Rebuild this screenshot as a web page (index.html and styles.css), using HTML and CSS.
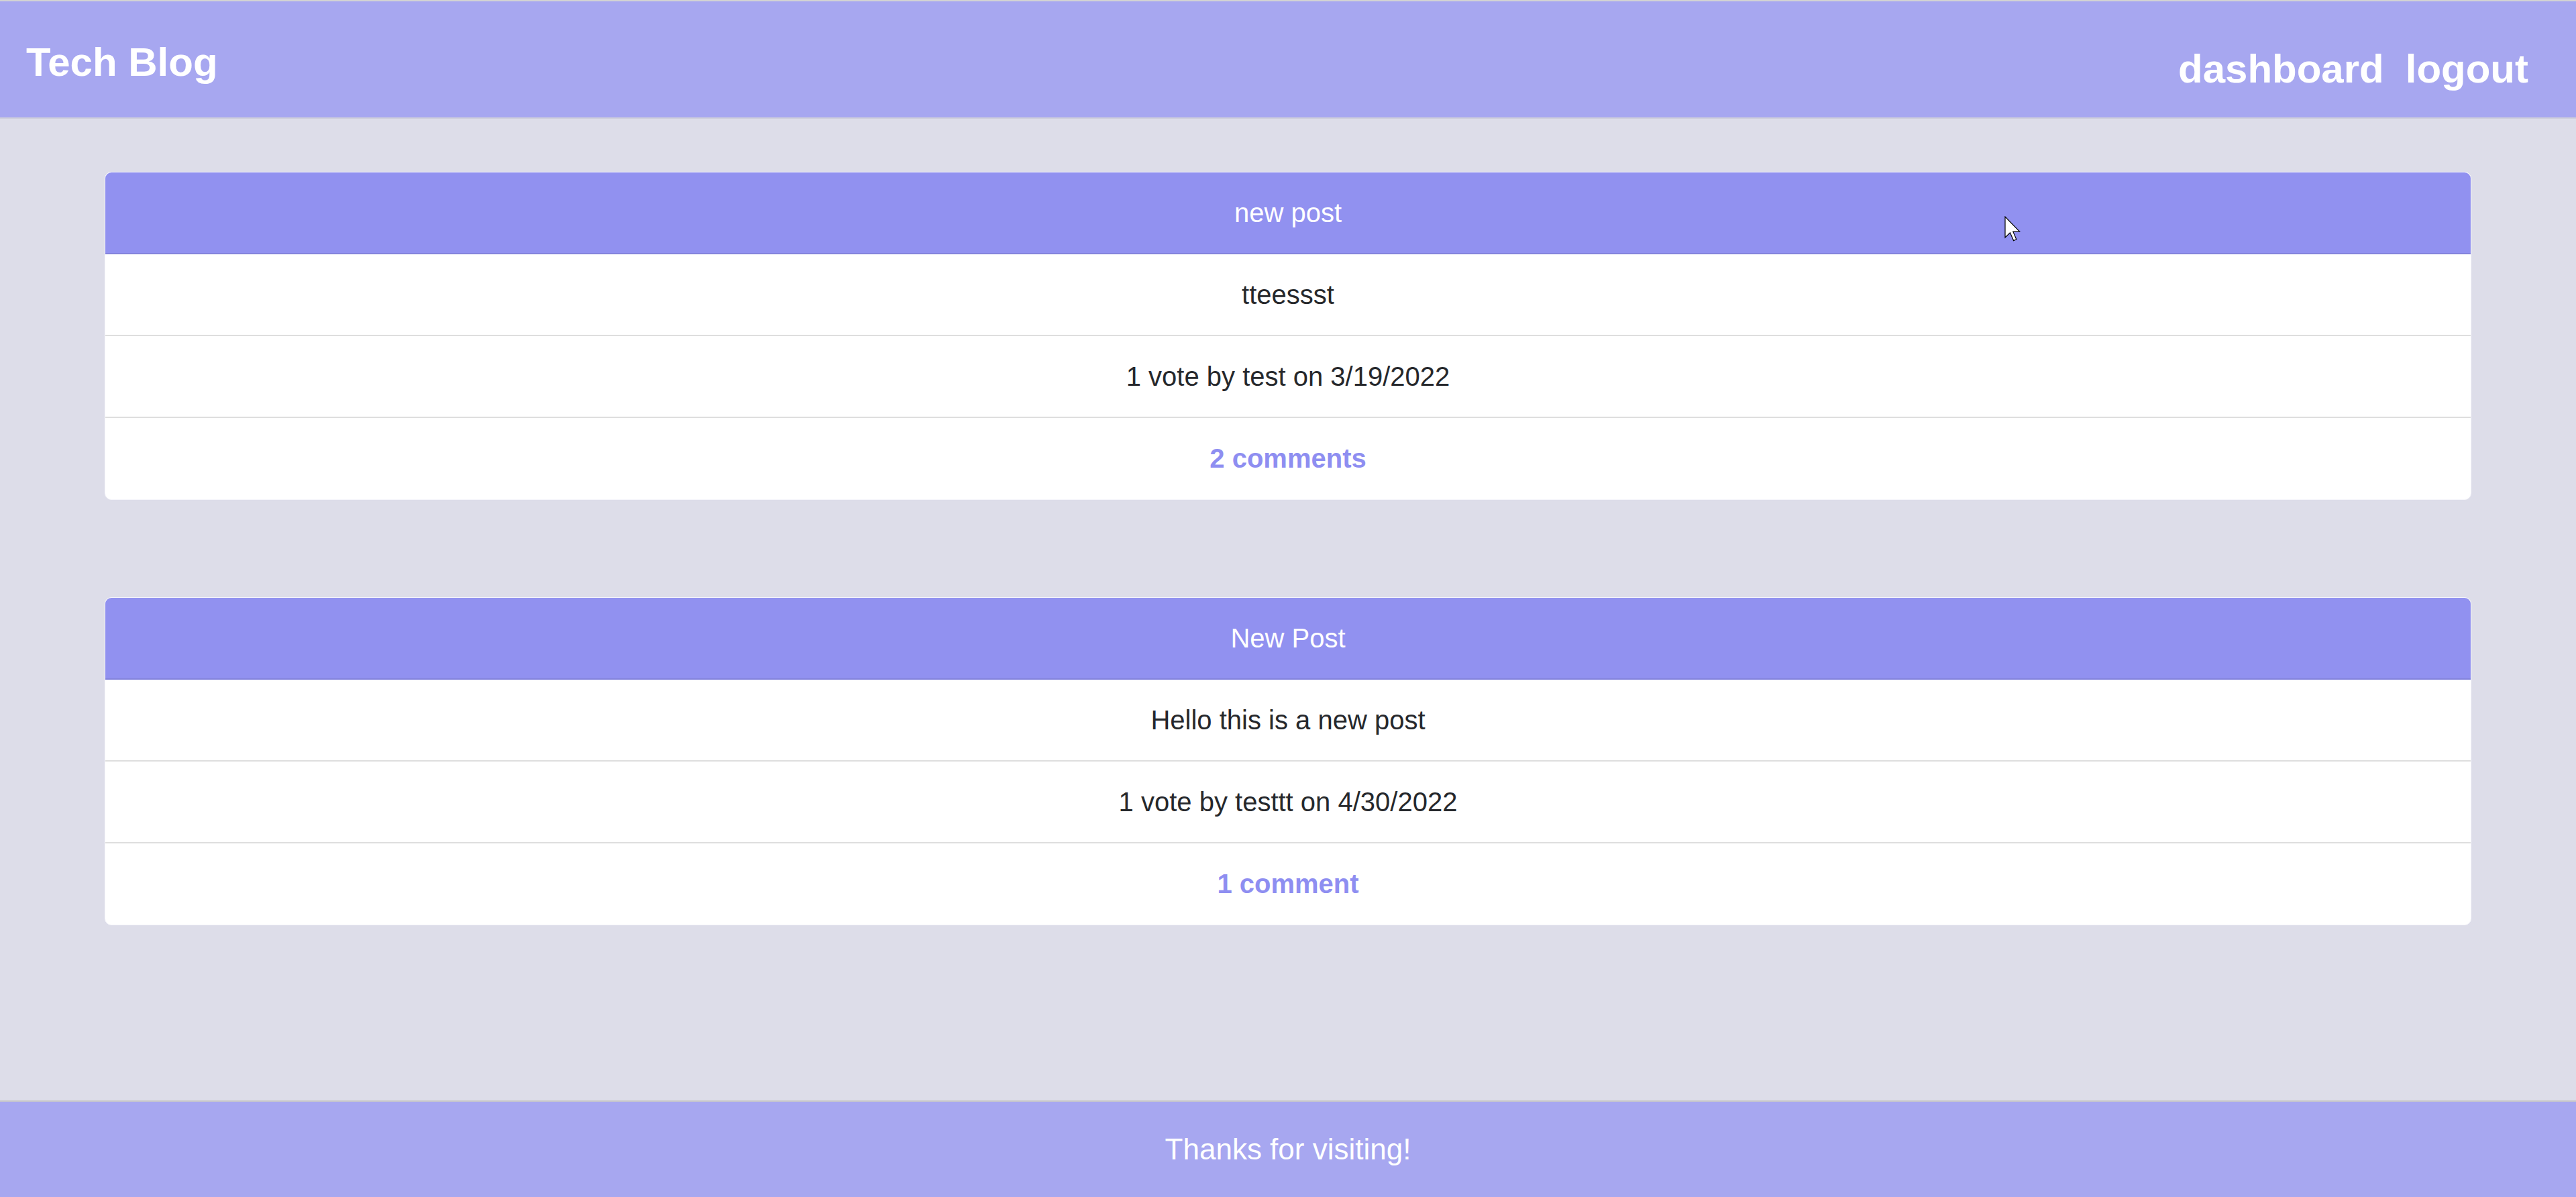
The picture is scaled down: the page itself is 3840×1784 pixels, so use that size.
FILE: index.html
```html
<!DOCTYPE html>
<html lang="en">
<head>
<meta charset="utf-8">
<title>Tech Blog</title>
<link rel="stylesheet" href="styles.css">
</head>
<body>
<header class="site-header">
  <h1 class="brand">Tech Blog</h1>
  <nav class="nav">
    <a class="nav-link" href="#">dashboard</a>
    <a class="nav-link" href="#">logout</a>
  </nav>
</header>
<main class="posts">
  <article class="card">
    <div class="card-header">new post</div>
    <div class="card-row">tteessst</div>
    <div class="card-row">1 vote by test on 3/19/2022</div>
    <div class="card-row"><a class="comments" href="#">2 comments</a></div>
  </article>
  <article class="card">
    <div class="card-header">New Post</div>
    <div class="card-row">Hello this is a new post</div>
    <div class="card-row">1 vote by testtt on 4/30/2022</div>
    <div class="card-row"><a class="comments" href="#">1 comment</a></div>
  </article>
</main>
<footer class="site-footer">Thanks for visiting!</footer>
<svg class="cursor" width="24" height="38" viewBox="0 0 12 19" aria-hidden="true">
  <polygon points="0.5,0.5 0.5,16 4.2,12.4 6.8,18.3 8.9,17.4 6.4,11.6 11.3,11.6" fill="#fff" stroke="#000" stroke-width="0.6" stroke-linejoin="miter"/>
</svg>
</body>
</html>
```

FILE: styles.css
```css
* {
  box-sizing: border-box;
}

html, body {
  margin: 0;
  padding: 0;
}

body {
  min-height: 1784px;
  display: flex;
  flex-direction: column;
  background: #dddde9;
  font-family: "Liberation Sans", Arial, sans-serif;
  font-size: 40px;
  line-height: 60px;
  color: #26282c;
  position: relative;
}

.site-header {
  display: flex;
  justify-content: space-between;
  align-items: flex-start;
  height: 177px;
  padding: 0 71px 0 39px;
  background: #a7a7f0;
  border-top: 2px solid #d3d3d3;
  border-bottom: 2px solid #cfcfdb;
}

.brand {
  margin: 56px 0 0;
  font-size: 60px;
  line-height: 69px;
  font-weight: 700;
  color: #fff;
}

.nav {
  display: flex;
  gap: 32px;
  margin-top: 66px;
}

.nav-link {
  font-size: 60px;
  line-height: 69px;
  font-weight: 700;
  color: #fff;
  text-decoration: none;
}

.posts {
  flex: 1;
  display: flex;
  flex-direction: column;
  gap: 145px;
  padding: 79px 156px 0;
}

.card {
  background: #fff;
  border: 1px solid #f6f6fb;
  border-radius: 10px;
  overflow: hidden;
  text-align: center;
}

.card-header {
  padding: 30px 50px;
  background: #9191f0;
  color: #fff;
  border-bottom: 2px solid #8383dc;
}

.card-row {
  padding: 30px 50px;
  border-bottom: 2px solid #dedede;
}

.card-row:last-child {
  border-bottom: 0;
  padding-bottom: 31px;
}

.comments {
  color: #8e8ef1;
  font-weight: 700;
  text-decoration: none;
}

.site-footer {
  height: 144px;
  display: flex;
  align-items: center;
  justify-content: center;
  background: #a7a7f0;
  border-top: 2px solid #c9c9c9;
  color: #fff;
  font-size: 44px;
  line-height: 60px;
}

.cursor {
  position: absolute;
  left: 2988px;
  top: 322px;
}
```
